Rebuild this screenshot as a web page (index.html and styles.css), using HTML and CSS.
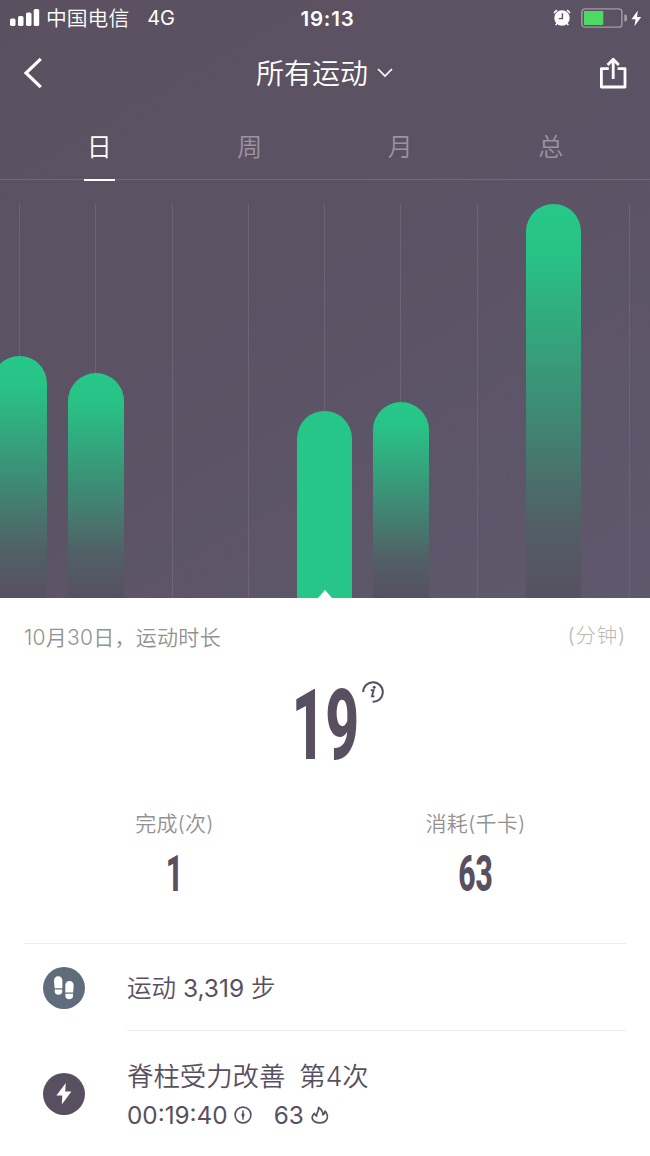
FILE: index.html
```html
<!DOCTYPE html>
<html lang="zh-CN">
<head>
    <meta charset="UTF-8">
    <meta name="viewport" content="width=device-width, initial-scale=1.0">
    <title>所有运动</title>
    <link rel="stylesheet" href="styles.css">
</head>
<body>
    <div class="hero">
        <!-- Status bar -->
        <div class="status-bar">
            <div class="status-left">
                <svg class="signal" width="30" height="18" viewBox="0 0 30 18" fill="#fff">
                    <rect x="0" y="9.5" width="5.5" height="7.5" rx="1.6"/>
                    <rect x="8" y="7" width="5.5" height="10" rx="1.6"/>
                    <rect x="16" y="3.5" width="5.5" height="13.5" rx="1.6"/>
                    <rect x="23.7" y="0" width="5.5" height="17" rx="1.6"/>
                </svg>
                <span class="carrier">中国电信</span>
                <span class="network">4G</span>
            </div>
            <span class="clock">19:13</span>
            <div class="status-right">
                <svg width="18" height="18" viewBox="0 0 18 18" fill="none">
                    <circle cx="9" cy="9" r="7.7" fill="#fff"/>
                    <path d="M1.2 4.2A4.4 4.4 0 0 1 4.2 1.2M13.8 1.2A4.4 4.4 0 0 1 16.8 4.2" stroke="#fff" stroke-width="1.6"/>
                    <path d="M3.8 14.5L2.8 16.2M14.2 14.5L15.2 16.2" stroke="#fff" stroke-width="1.6"/>
                    <path d="M9.4 4.2V9.6H5.8" stroke="#5b5263" stroke-width="1.4"/>
                </svg>
                <svg class="battery" width="46" height="20" viewBox="0 0 46 20">
                    <rect x="0.9" y="0.9" width="40" height="18.2" rx="3.2" fill="none" stroke="#a29ca8" stroke-width="1.4"/>
                    <rect x="3" y="3" width="19.3" height="14" rx="1" fill="#4cd964"/>
                    <path d="M43.3 6.5A3.5 3.5 0 0 1 43.3 13.5Z" fill="#a29ca8"/>
                </svg>
                <svg class="charging" width="11" height="17" viewBox="0 0 11 17" fill="#fff">
                    <path d="M6.8 0.5L0.5 9.3H4.6L3.4 16.3L10.2 7H6Z"/>
                </svg>
            </div>
        </div>

        <!-- Title bar -->
        <div class="nav-bar">
            <svg class="back" width="20" height="32" viewBox="0 0 20 32" fill="none" stroke="#fff" stroke-width="3.2">
                <path d="M17.8 1.8L3 16L17.8 30.2"/>
            </svg>
            <div class="nav-title">
                <span>所有运动</span>
                <svg width="16" height="10" viewBox="0 0 16 10" fill="none" stroke="#fff" stroke-width="1.7">
                    <path d="M1 1L8 8L15 1"/>
                </svg>
            </div>
            <svg class="share" width="28" height="32" viewBox="0 0 28 32" fill="none" stroke="#fff" stroke-width="2.8" stroke-linejoin="round">
                <path d="M9.8 11.6H2.4V30H26V11.6H18.6"/>
                <path d="M14.2 22V3M8.6 8L14.2 2.2L19.8 8"/>
            </svg>
        </div>

        <div class="tabs">
            <div class="tab active">日</div>
            <div class="tab">周</div>
            <div class="tab">月</div>
            <div class="tab">总</div>
        </div>

        <!-- Daily bars -->
        <div class="chart">
            <div class="day"><div class="bar" style="height: 242px"></div></div>
            <div class="day"><div class="bar" style="height: 225px"></div></div>
            <div class="day"></div>
            <div class="day"></div>
            <div class="day"><div class="bar selected" style="height: 187px"></div></div>
            <div class="day"><div class="bar" style="height: 196px"></div></div>
            <div class="day"></div>
            <div class="day"><div class="bar" style="height: 394px"></div></div>
            <div class="day"></div>
        </div>
    </div>

    <div class="panel">
        <div class="summary-head">
            <span class="date">10月30日，运动时长</span>
            <span class="unit">(分钟)</span>
        </div>

        <div class="total">
            <span class="number total-number">19</span>
            <svg class="info" width="22" height="22" viewBox="0 0 22 22" fill="none">
                <path d="M1.2 11A9.8 9.8 0 1 1 10.6 20.8" stroke="#584f60" stroke-width="2"/>
                <path d="M8.8 9.2H11.6L9.9 15.4H12.4" stroke="#584f60" stroke-width="1.9"/>
                <circle cx="12.2" cy="6.3" r="1.5" fill="#584f60"/>
            </svg>
        </div>

        <div class="stats">
            <div class="stat">
                <div class="stat-label">完成(次)</div>
                <div class="number stat-number">1</div>
            </div>
            <div class="stat">
                <div class="stat-label">消耗(千卡)</div>
                <div class="number stat-number">63</div>
            </div>
        </div>

        <div class="record steps">
            <svg class="record-icon" width="42" height="42" viewBox="0 0 42 42" fill="#fff">
                <circle cx="21" cy="21" r="21" fill="#606c7b"/>
                <path d="M11 14C11 11 12.6 9.3 15.2 9.3S19.4 11 19.4 14V21.2H11.6Z"/>
                <path d="M11.7 22.6H19.3V24A3.8 3.8 0 0 1 11.7 24Z"/>
                <path d="M22.3 18.6C22.3 15.6 23.9 13.9 26.5 13.9S30.7 15.6 30.7 18.6L30.1 25.4H22.3Z"/>
                <path d="M22.4 26.8H30V28.5A3.8 3.8 0 0 1 22.4 28.5Z"/>
            </svg>
            <div class="record-text steps-text">运动 <span class="count">3,319</span> 步</div>
        </div>

        <div class="record">
            <svg class="record-icon" width="42" height="42" viewBox="0 0 42 42" fill="#fff">
                <circle cx="21" cy="21" r="21" fill="#584f60"/>
                <path d="M22.8 10L13.4 22.6H19.3L18.8 31.5L28.4 18.6H22.2Z"/>
            </svg>
            <div class="record-text">
                <div class="record-title"><span>脊柱受力改善</span><span>第4次</span></div>
                <div class="record-meta">
                    <span class="count">00:19:40</span>
                    <svg class="timer" width="18" height="18" viewBox="0 0 18 18" fill="none" stroke="#584f60">
                        <circle cx="9" cy="9" r="7.9" stroke-width="1.6"/>
                        <path d="M9 4.2V13.8" stroke-width="1.4"/>
                        <ellipse cx="9" cy="9" rx="1" ry="1.8" fill="#584f60"/>
                    </svg>
                    <span class="count">63</span>
                    <svg class="flame" width="18" height="18" viewBox="0 0 18 18" fill="none" stroke="#584f60" stroke-width="1.7" stroke-linejoin="round">
                        <path d="M3.4 7.4C.8 9.8.6 12.4 2.4 14.6C5.3 17.6 12.4 17.6 15 14.6C17.2 11.9 16.6 8 14 5.2C13.8 6.8 13.2 7.9 12 8.9C11.8 5.6 10.4 3 7.6 1.4C7.8 4 7 5.8 5.8 7.8C5.5 8.4 5.5 9.2 5.6 10.1C4.4 9.4 3.7 8.6 3.4 7.4Z"/>
                    </svg>
                </div>
            </div>
        </div>
    </div>
</body>
</html>
```
FILE: styles.css
```css
* {
    box-sizing: border-box;
}

body {
    margin: 0;
    width: 650px;
    height: 1156px;
    overflow: hidden;
    font-family: Inter, "Noto Sans CJK SC", sans-serif;
    font-weight: 350;
    color: #584f60;
    background-color: #fff;
}

svg {
    display: block;
    flex-shrink: 0;
}

.hero {
    height: 598px;
    overflow: hidden;
    color: #fff;
    background: linear-gradient(150deg, #5b505f, #5b5364 40%, #5f576b);
}

/* Status bar */
.status-bar {
    display: grid;
    grid-template-columns: 1fr auto 1fr;
    align-items: center;
    height: 36px;
    padding: 0 8px 0 10px;
}

.status-left,
.status-right {
    display: flex;
    align-items: center;
}

.carrier {
    margin-left: 6px;
    padding-top: 2px;
    font-size: 20.8px;
    line-height: 34px;
}

.network {
    margin-left: 18px;
    font-size: 20px;
    font-weight: 400;
}

.clock {
    padding-left: 3px;
    font-size: 20.5px;
    font-weight: 600;
    letter-spacing: 0.8px;
}

.status-right {
    justify-content: flex-end;
}

.battery {
    margin-left: 10px;
}

.charging {
    margin-left: 4px;
}

/* Title bar */
.nav-bar {
    display: flex;
    align-items: center;
    justify-content: space-between;
    height: 74px;
    padding: 0 23px;
}

.nav-title {
    display: flex;
    align-items: center;
    gap: 9px;
    margin-left: 7px;
    font-size: 28px;
}

.nav-title span {
    line-height: 40px;
    padding-top: 2px;
}

/* Tabs */
.tabs {
    display: grid;
    grid-template-columns: repeat(4, 1fr);
    height: 70px;
    padding: 0 24px;
    border-bottom: 1px solid #706879;
}

.tab {
    justify-self: center;
    width: 31px;
    height: 71px;
    padding-top: 1px;
    font-size: 25px;
    line-height: 73px;
    text-align: center;
    color: #9b92a2;
}

.tab.active {
    color: #fff;
    border-bottom: 2px solid #fff;
}

/* Chart */
.chart {
    display: grid;
    grid-template-columns: repeat(9, 76.25px);
    height: 394px;
    margin: 24px 0 0 -18.5px;
}

.day {
    display: flex;
    align-items: flex-end;
    justify-content: center;
    background: linear-gradient(#6c6474, #6c6474) center / 1px 100% no-repeat;
}

.bar {
    width: 55.5px;
    border-radius: 28px 28px 0 0;
    background: linear-gradient(#26c889, #28c386 12%, #3f8974 53%, #516066 80%, #575061);
}

.bar.selected {
    display: flex;
    align-items: flex-end;
    justify-content: center;
    background: #26c689;
}

.bar.selected::after {
    content: "";
    border: 7px solid transparent;
    border-top: 0;
    border-bottom: 8px solid #fff;
}

/* Summary */
.panel {
    padding: 0 24px;
}

.summary-head {
    display: flex;
    justify-content: space-between;
    height: 80px;
    line-height: 80px;
    color: #929292;
}

.date {
    font-size: 21px;
    letter-spacing: 0.27px;
}

.unit {
    font-size: 20.5px;
    font-weight: 300;
    line-height: 75px;
    letter-spacing: 0.8px;
    color: #b8b8b8;
}

.number {
    font-family: Roboto, sans-serif;
    font-weight: 800;
    transform: scaleX(0.6);
}

.total {
    display: flex;
    justify-content: center;
    height: 125px;
}

.total-number {
    width: 112px;
    font-size: 98px;
    line-height: 96px;
    text-align: center;
    margin-left: 3px;
}

.info {
    margin: 3px 0 0 -19px;
}

.stats {
    display: grid;
    grid-template-columns: 1fr 1fr;
    height: 141px;
    text-align: center;
    border-bottom: 1px solid #ebebeb;
}

.stat-label {
    height: 40px;
    font-size: 21px;
    line-height: 42px;
    letter-spacing: 0.2px;
    color: #929292;
}

.stat-number {
    font-size: 50px;
    line-height: 62px;
}

/* Records */
.record {
    display: flex;
    align-items: center;
    height: 125px;
    padding-left: 19px;
}

.record-text {
    flex: 1;
    margin-left: 42px;
}

.count {
    font-weight: 400;
}

.steps {
    height: 87px;
}

.steps-text {
    height: 87px;
    font-size: 24.5px;
    line-height: 89px;
    border-bottom: 1px solid #ebebeb;
}

.record-title {
    display: flex;
    gap: 14px;
    padding-top: 3px;
    font-size: 26.4px;
    line-height: 40px;
}

.record-meta {
    display: flex;
    align-items: center;
    font-size: 24.3px;
    line-height: 38px;
}

.timer {
    margin: 0 22px 0 6px;
}

.flame {
    margin-left: 7px;
}
```
